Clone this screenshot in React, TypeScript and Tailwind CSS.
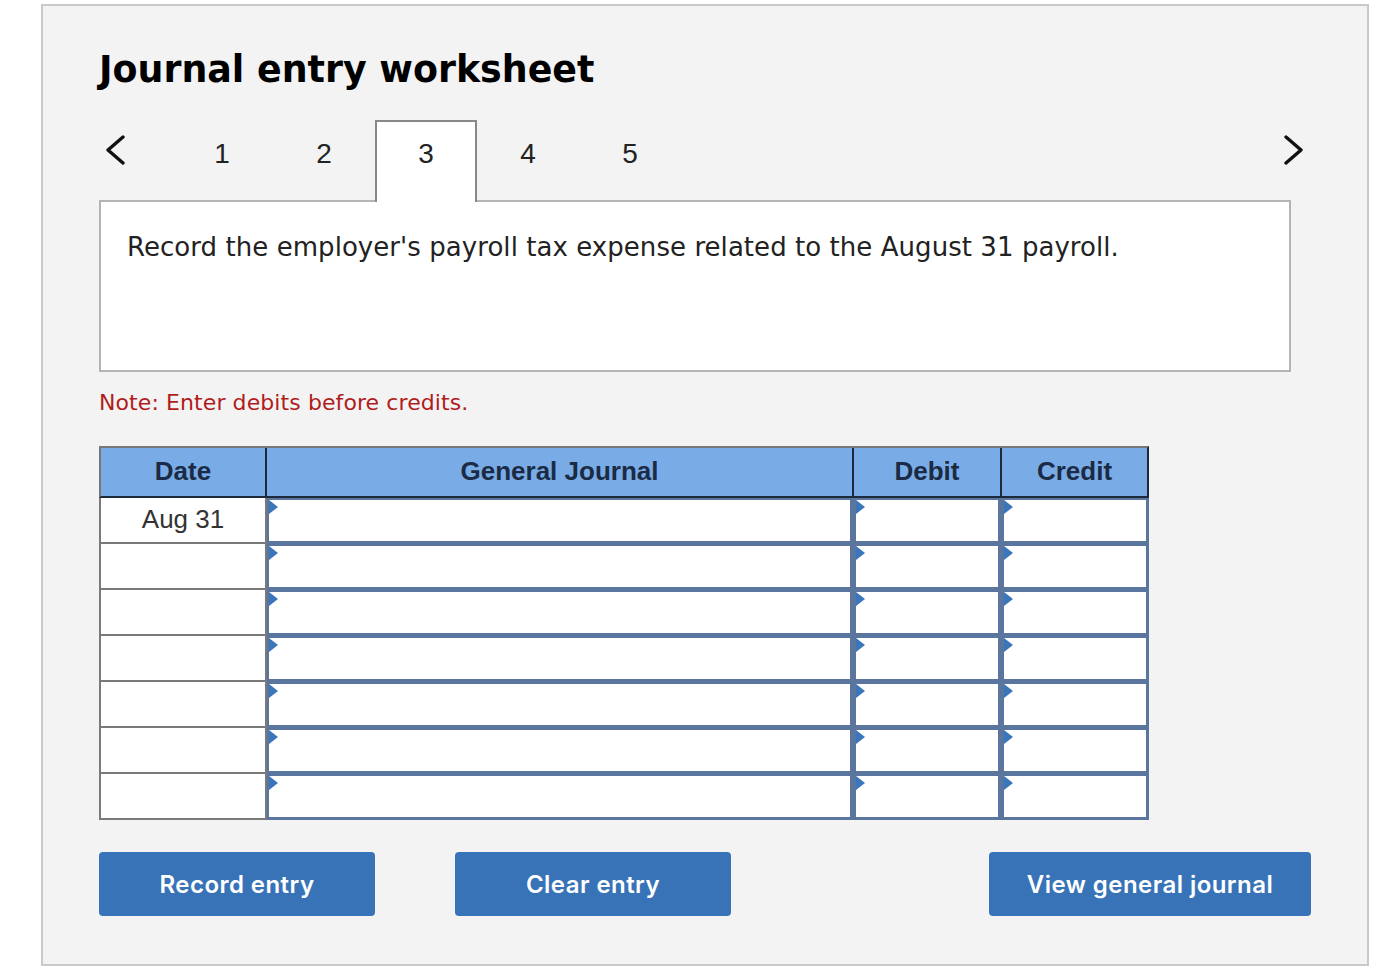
const tabs = [1, 2, 3, 4, 5];
const rows = ["Aug 31", "", "", "", "", "", ""];

const Chevron = ({ flip }: { flip?: boolean }) => (
  <svg width="20" height="30" viewBox="0 0 20 30" fill="none" stroke="#111" strokeWidth="3.4" strokeLinecap="round" strokeLinejoin="round">
    <path d={flip ? "M3 2 L18 15 L3 28" : "M17 2 L2 15 L17 28"} />
  </svg>
);

const InputCell = ({ w }: { w: string }) => (
  <div className={`relative h-[46px] shrink-0 border-r-[3px] border-t-2 border-b-[3px] border-[#5b769e] bg-white ${w}`}>
    <span className="absolute left-0 top-0 h-0 w-0 border-y-[7px] border-l-[9px] border-y-transparent border-l-[#3a76bb]" />
  </div>
);

const Btn = ({ label, w }: { label: string; w: string }) => (
  <button className={`h-[64px] rounded-[4px] bg-[#3873b8] pt-[1px] font-['Inter',sans-serif] text-[24px] font-semibold tracking-[0.45px] text-white ${w}`}>{label}</button>
);

export default function App() {
  return (
    <div className="h-[971px] w-[1387px] overflow-hidden bg-white pl-[41px] pt-[4px] font-['Open_Sans',sans-serif]">
      <div className="h-[962px] w-[1328px] border-2 border-[#c9c9c9] bg-[#f3f3f3] pl-[56px] pt-[41px]">
        <h1 className="font-['DejaVu_Sans',sans-serif] text-[36.4px] font-bold leading-[46px] text-black">Journal entry worksheet</h1>
        <div className="mt-[27px] flex h-[80px] w-[1204px] items-start">
          <div className="mt-[15px] w-[72px] pl-[7px]"><Chevron /></div>
          {tabs.map((t) => (
            <div key={t} className={`relative z-10 flex h-[82px] w-[102px] justify-center border-2 border-b-0 pt-[14px] font-['Liberation_Sans',sans-serif] text-[28px] leading-[36px] text-[#222] ${t === 3 ? "border-[#888] bg-white" : "border-transparent"}`}>{t}</div>
          ))}
          <div className="mt-[15px] ml-auto"><Chevron flip /></div>
        </div>
        <div className="h-[172px] w-[1192px] border-2 border-[#b4b4b4] bg-white px-[26px] py-[28px] font-['DejaVu_Sans',sans-serif] text-[26px] leading-[34px] tracking-[0.055px] text-[#222]">
          Record the employer's payroll tax expense related to the August 31 payroll.
        </div>
        <p className="mt-[15px] font-['DejaVu_Sans',sans-serif] text-[22px] leading-[32px] tracking-[0.09px] text-[#b01c1c]">Note: Enter debits before credits.</p>
        <div className="mt-[27px] w-[1050px] font-['Liberation_Sans',sans-serif]">
          <div className="flex h-[52px] border-2 border-[#777] border-r-[#1c2a3c] border-b-[#1c2a3c] bg-[#79ace6] text-[26px] font-bold text-[#1b2b45]">
            <div className="flex w-[166px] items-center justify-center border-r-2 border-[#1c2a3c] pb-[2px]">Date</div>
            <div className="flex w-[587px] items-center justify-center border-r-2 border-[#1c2a3c] pb-[2px]">General Journal</div>
            <div className="flex w-[148px] items-center justify-center border-r-2 border-[#1c2a3c] pb-[2px]">Debit</div>
            <div className="flex flex-1 items-center justify-center pb-[2px]">Credit</div>
          </div>
          {rows.map((r, i) => (
            <div key={i} className="flex h-[46px]">
              <div className="flex w-[168px] shrink-0 items-center justify-center border-x-2 border-b-2 border-[#7a7a7a] bg-white pb-[2px] text-[26px] text-[#333]">{r}</div>
              <InputCell w="w-[586px] border-l-2" />
              <InputCell w="w-[148px] border-l-[3px]" />
              <InputCell w="w-[148px] border-l-[3px]" />
            </div>
          ))}
        </div>
        <div className="mt-[32px] flex w-[1212px]">
          <Btn label="Record entry" w="w-[276px]" />
          <div className="ml-[80px]"><Btn label="Clear entry" w="w-[276px]" /></div>
          <div className="ml-auto"><Btn label="View general journal" w="w-[322px]" /></div>
        </div>
      </div>
    </div>
  );
}
